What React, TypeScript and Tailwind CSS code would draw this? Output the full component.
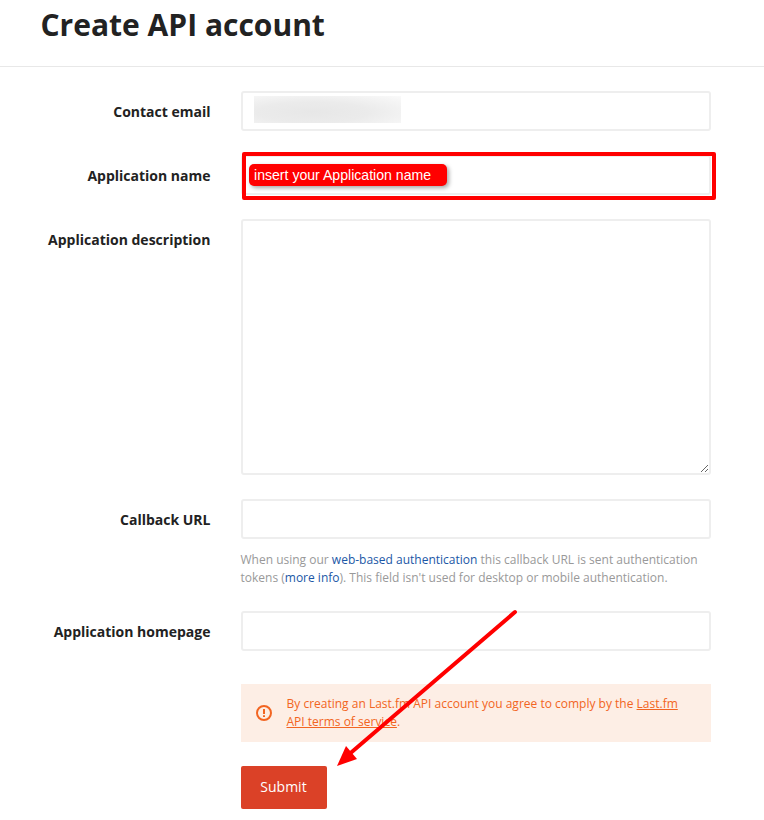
import type { ReactNode } from "react";

const field =
  "block w-full rounded-[3px] border-2 border-[#eeeeee] bg-white px-3 text-sm text-[#222222] outline-none";

function Row({ label, children, className = "" }: { label: string; children: ReactNode; className?: string }) {
  return (
    <div className={`flex ${className}`}>
      <label className="w-[210.5px] shrink-0 pt-[9px] text-right text-sm leading-6 font-bold">{label}</label>
      <div className="relative ml-[30.5px] w-[470px]">{children}</div>
    </div>
  );
}

export default function App() {
  return (
    <div className="relative h-[820px] w-[764px] overflow-hidden bg-white font-['Open_Sans',sans-serif] text-[#222222]">
      <header className="h-[67px] border-b border-[#e8e8e8] pl-[40.5px]">
        <h1 className="pt-[5px] text-[30px] leading-10 font-bold">Create API account</h1>
      </header>

      <form className="pt-6" onSubmit={(e) => e.preventDefault()}>
        <Row label="Contact email">
          <div className={`${field} h-10`}>
            <div className="-ml-px mt-[3px] h-[27px] w-[147px] bg-[radial-gradient(ellipse_at_40%_60%,#e7e7e7_0%,#ebebeb_45%,#f3f3f3_75%,#fafafa_100%)]" />
          </div>
        </Row>

        <Row label="Application name" className="mt-6">
          <input className={`${field} h-10`} />
          <div className="absolute top-[-3px] left-px h-12 w-[474px] rounded-[2px] border-4 border-[#ff0000]" />
          <div className="absolute top-[9px] left-2 h-[22px] w-[198px] rounded-[5px] bg-[#ff0000] pl-[5px] font-['Liberation_Sans',Arial,sans-serif] text-[14.1px] leading-[22px] whitespace-nowrap text-white shadow-[2px_2px_4px_rgba(0,0,0,0.35)]">
            insert your Application name
          </div>
        </Row>

        <Row label="Application description" className="mt-6">
          <textarea className={`${field} h-64 resize`} />
        </Row>

        <Row label="Callback URL" className="mt-6">
          <input className={`${field} h-10`} />
          <p className="mt-3 -ml-[0.5px] text-xs leading-[18px] text-[#999999]">
            When using our <a className="text-[#1b57a6]">web-based authentication</a> this callback URL is sent
            authentication tokens (<a className="text-[#1b57a6]">more info</a>). This field isn't used for desktop or
            mobile authentication.
          </p>
        </Row>

        <Row label="Application homepage" className="mt-6">
          <input className={`${field} h-10`} />
        </Row>

        <div className="mt-[33px] ml-[241px] flex h-[58px] w-[470px] items-center bg-[#fdeee5] pl-[15px] text-[#f26522]">
          <svg className="h-4 w-4 shrink-0" viewBox="0 0 16 16" fill="none" stroke="currentColor" strokeWidth="2">
            <circle cx="8" cy="8" r="7" />
            <path d="M8 4v5M8 10.2v1.8" />
          </svg>
          <p className="ml-[14.5px] w-[410px] text-xs leading-[18px]">
            By creating an Last.fm API account you agree to comply by the{" "}
            <a className="underline">Last.fm API terms of service</a>.
          </p>
        </div>

        <button className="mt-6 ml-[241px] block h-[43px] w-[86px] rounded-[2px] bg-[#db4127] pr-px pb-0.5 text-sm text-white">
          Submit
        </button>
      </form>

      <svg className="pointer-events-none absolute inset-0" width="764" height="820" viewBox="0 0 764 820">
        <path d="M515 612 350 753.5" stroke="#ff0000" strokeWidth="4" strokeLinecap="round" />
        <path d="M337 766 346 746 357 759Z" fill="#ff0000" />
      </svg>
    </div>
  );
}
